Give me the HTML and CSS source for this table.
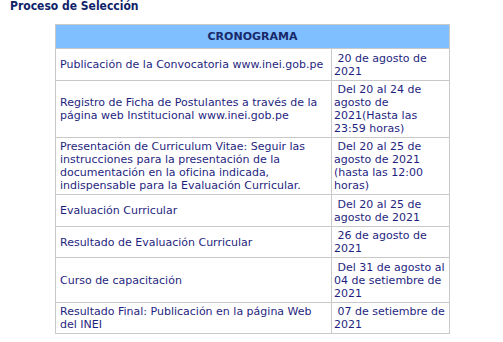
FILE: index.html
```html
<!DOCTYPE html>
<html lang="es">
<head>
<meta charset="utf-8">
<link rel="stylesheet" href="styles.css">
</head>
<body>
<h3 class="title">Proceso de Selección</h3>
<table class="crono">
  <colgroup><col class="c1"><col class="c2"></colgroup>
  <thead>
    <tr><th colspan="2">CRONOGRAMA</th></tr>
  </thead>
  <tbody>
    <tr class="r1"><td>Publicación de la Convocatoria www.inei.gob.pe</td><td>&nbsp;20 de agosto de 2021</td></tr>
    <tr class="r2"><td>Registro de Ficha de Postulantes a través de la página web Institucional www.inei.gob.pe</td><td>&nbsp;Del 20 al 24 de agosto de 2021(Hasta las 23:59 horas)</td></tr>
    <tr class="r3"><td>Presentación de Curriculum Vitae: Seguir las instrucciones para la presentación de la documentación en la oficina indicada, indispensable para la Evaluación Curricular.</td><td>&nbsp;Del 20 al 25 de agosto de 2021 (hasta las 12:00 horas)</td></tr>
    <tr class="r4"><td>Evaluación Curricular</td><td>&nbsp;Del 20 al 25 de agosto de 2021</td></tr>
    <tr class="r5"><td>Resultado de Evaluación Curricular</td><td>&nbsp;26 de agosto de 2021</td></tr>
    <tr class="r6"><td>Curso de capacitación</td><td>&nbsp;Del 31 de agosto al 04 de setiembre de 2021</td></tr>
    <tr class="r7"><td>Resultado Final: Publicación en la página Web del INEI</td><td>&nbsp;07 de setiembre de 2021</td></tr>
  </tbody>
</table>
</body>
</html>
```
FILE: styles.css
```css
html, body {
  margin: 0;
  padding: 0;
  background: #ffffff;
}
body {
  font-family: "DejaVu Sans", sans-serif;
  font-size: 11px;
  line-height: 13px;
  color: #1f1f80;
}
.title {
  margin: 0;
  padding: 0 0 0 10px;
  height: 24px;
  font-size: 12px;
  line-height: 13px;
  font-weight: bold;
  font-stretch: condensed;
  color: #0f1f6a;
}
.crono {
  margin-left: 55px;
  width: 394px;
  border-collapse: collapse;
  table-layout: fixed;
}
.c1 { width: 276px; }
.c2 { width: 118px; }
.crono th,
.crono td {
  border: 1px solid #c9c9c9;
}
.crono th {
  background: #80bfff;
  color: #18286a;
  font-weight: bold;
  font-size: 11px;
  height: 23px;
  padding: 0;
  text-align: center;
}
.crono td {
  padding: 2px 4px;
  vertical-align: middle;
  text-align: left;
}
.crono td:last-child {
  padding: 2px 3px 2px 2px;
}
.r1 td { height: 27px; }
.r2 td { height: 51px; }
.r3 td { height: 52px; }
.r4 td { height: 27px; }
.r5 td { height: 26px; }
.r6 td { height: 40px; }
.r7 td { height: 24px; }
```
